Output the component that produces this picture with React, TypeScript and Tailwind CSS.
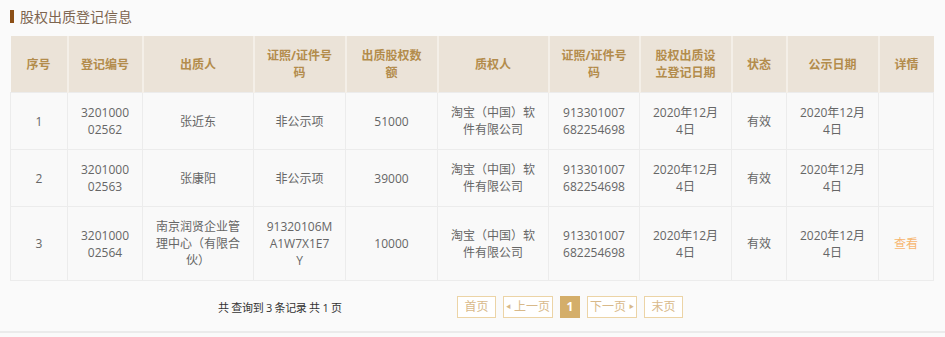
import React from "react";

type Row = {
  no: string;
  regNo: string;
  pledgor: string;
  pledgorId: string;
  amount: string;
  pledgee: string;
  pledgeeId: string;
  regDate: string;
  status: string;
  pubDate: string;
  detail?: string;
};

// line breaks follow the narrow columns of the original page
const rows: Row[] = [
  {
    no: "1",
    regNo: "3201000\n02562",
    pledgor: "张近东",
    pledgorId: "非公示项",
    amount: "51000",
    pledgee: "淘宝（中国）软\n件有限公司",
    pledgeeId: "913301007\n682254698",
    regDate: "2020年12月\n4日",
    status: "有效",
    pubDate: "2020年12月\n4日",
  },
  {
    no: "2",
    regNo: "3201000\n02563",
    pledgor: "张康阳",
    pledgorId: "非公示项",
    amount: "39000",
    pledgee: "淘宝（中国）软\n件有限公司",
    pledgeeId: "913301007\n682254698",
    regDate: "2020年12月\n4日",
    status: "有效",
    pubDate: "2020年12月\n4日",
  },
  {
    no: "3",
    regNo: "3201000\n02564",
    pledgor: "南京润贤企业管\n理中心（有限合\n伙）",
    pledgorId: "91320106M\nA1W7X1E7\nY",
    amount: "10000",
    pledgee: "淘宝（中国）软\n件有限公司",
    pledgeeId: "913301007\n682254698",
    regDate: "2020年12月\n4日",
    status: "有效",
    pubDate: "2020年12月\n4日",
    detail: "查看",
  },
];

const columns = [
  { title: "序号", w: "w-[57px]" },
  { title: "登记编号", w: "w-[75px]" },
  { title: "出质人", w: "w-[111px]" },
  { title: "证照/证件号码", w: "w-[92px]" },
  { title: "出质股权数额", w: "w-[92px]" },
  { title: "质权人", w: "w-[111px]" },
  { title: "证照/证件号码", w: "w-[91px]" },
  { title: "股权出质设立登记日期", w: "w-[92px]" },
  { title: "状态", w: "w-[55px]" },
  { title: "公示日期", w: "w-[92px]" },
  { title: "详情", w: "w-[55px]" },
];

const cell =
  "border border-[#ececec] px-[6px] py-[11px] text-center align-middle whitespace-pre-line";

const PageButton = ({
  children,
  w,
  active = false,
}: {
  children: React.ReactNode;
  w: string;
  active?: boolean;
}) => (
  <span
    className={[
      "inline-flex h-[22px] items-center justify-center border text-[12px]",
      w,
      active
        ? "border-[#d4ae6a] bg-[#d4ae6a] font-bold text-white"
        : "border-[#ecd4a6] bg-white text-[#d8b98a]",
    ].join(" ")}
  >
    {children}
  </span>
);

export default function App() {
  return (
    <div
      className="h-[337px] w-[945px] overflow-hidden bg-[#fafafa]"
      style={{ fontFamily: '"Open Sans", "Noto Sans CJK SC", sans-serif' }}
    >
      <div className="border-b-2 border-[#ebebeb] pb-[13px]">
        <div className="flex items-center gap-[6px] px-[10px] pt-[8px] pb-[11px]">
          <span className="h-[13px] w-[4px] bg-[#8c4f16]" />
          <h2 className="text-[14px] leading-[17px] text-[#7d6550]">股权出质登记信息</h2>
        </div>

        <table className="mx-[10px] w-[923px] table-fixed border-collapse text-[12px] leading-[17px]">
          <thead>
            <tr className="bg-[#ebe3d8]">
              {columns.map((c, i) => (
                <th
                  key={i}
                  className={`${c.w} border-x-2 border-[#f4efe8] px-[10px] py-[11px] text-center align-middle font-bold text-[#b38c4c] first:border-l-0 last:border-r-0`}
                >
                  {c.title}
                </th>
              ))}
            </tr>
          </thead>
          <tbody className="text-[#666]">
            {rows.map((r) => (
              <tr key={r.no} className="bg-[#f9f9f9]">
                <td className={cell}>{r.no}</td>
                <td className={cell}>{r.regNo}</td>
                <td className={cell}>{r.pledgor}</td>
                <td className={cell}>{r.pledgorId}</td>
                <td className={cell}>{r.amount}</td>
                <td className={cell}>{r.pledgee}</td>
                <td className={cell}>{r.pledgeeId}</td>
                <td className={cell}>{r.regDate}</td>
                <td className={cell}>{r.status}</td>
                <td className={cell}>{r.pubDate}</td>
                <td className={cell}>
                  {r.detail && <span className="cursor-pointer text-[#f7b670]">{r.detail}</span>}
                </td>
              </tr>
            ))}
          </tbody>
        </table>

        <div className="mt-[15px] flex items-center">
          <p className="ml-[218px] w-[239px] pt-[2px] text-[11px] tracking-[-0.3px] text-[#333]">
            共 查询到 3 条记录 共 1 页
          </p>
          <div className="flex items-center gap-[7px]">
            <PageButton w="w-[39px]">首页</PageButton>
            <PageButton w="w-[50px]">
              <span className="mr-[3px] text-[5px]">◀</span>上一页
            </PageButton>
            <PageButton w="w-[20px]" active>
              1
            </PageButton>
            <PageButton w="w-[50px]">
              下一页<span className="ml-[3px] text-[5px]">▶</span>
            </PageButton>
            <PageButton w="w-[39px]">末页</PageButton>
          </div>
        </div>
      </div>
    </div>
  );
}
